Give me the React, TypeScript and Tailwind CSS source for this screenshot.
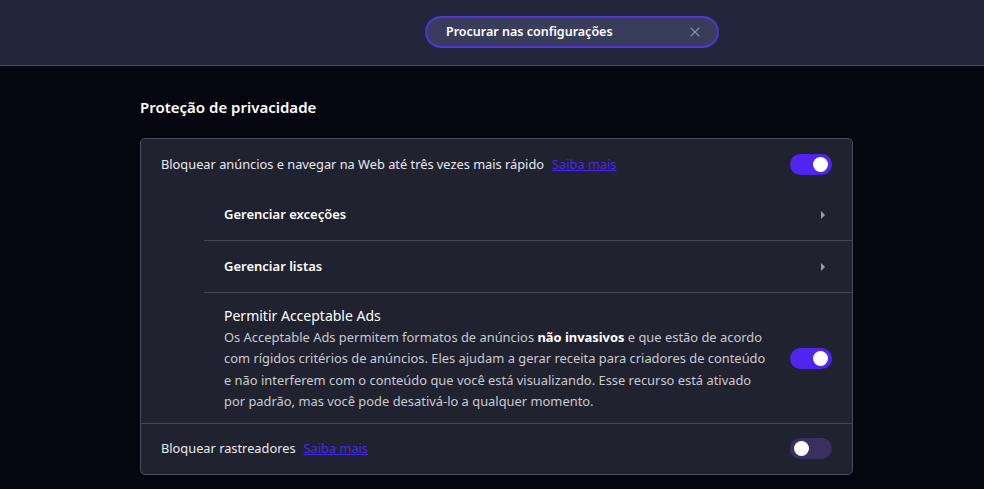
import { X } from 'lucide-react';

function Toggle({ on }: { on: boolean }) {
  return (
    <div
      className={
        on
          ? 'flex h-[21px] w-[42px] shrink-0 items-center justify-end rounded-full bg-[#5025f0] px-[4px]'
          : 'flex h-[21px] w-[42px] shrink-0 items-center justify-start rounded-full bg-[#3a3060] px-[4px]'
      }
    >
      <div className="h-[15px] w-[15px] rounded-full bg-white" />
    </div>
  );
}

function Caret() {
  return (
    <svg width="6" height="10" viewBox="0 0 6 10" className="mr-[26px]">
      <path d="M1 1 L5 5 L1 9 Z" fill="#9a9cab" />
    </svg>
  );
}

export default function App() {
  return (
    <div
      className="min-h-[489px] bg-[#05060f] text-[#e9e9ef]"
      style={{ fontFamily: '"Noto Sans", "Open Sans", sans-serif' }}
    >
      <header className="flex h-[66px] items-start justify-center border-b border-[#4a4c60] bg-[#22243a] pt-[16px]">
        <div className="ml-[160px] flex h-[32px] w-[294px] items-center justify-between rounded-full border-2 border-[#4f35d8] bg-[#3a3c5c] pl-[19px] pr-[14px]">
          <span className="text-[12.5px] font-semibold text-white">Procurar nas configurações</span>
          <X size={16} strokeWidth={1.6} className="text-[#8a8ca8]" />
        </div>
      </header>

      <main className="ml-[140px] w-[713px] pt-[30px]">
        <h2 className="mb-[20px] text-[15px] font-semibold leading-[22px] text-white">Proteção de privacidade</h2>

        <div className="overflow-hidden rounded-[5px] border border-[#4a4c5c] bg-[#20222f]">
          <div className="flex h-[51px] items-center justify-between px-[20px]">
            <div className="text-[12.8px]">
              Bloquear anúncios e navegar na Web até três vezes mais rápido
              <a className="ml-[8px] text-[12.8px] text-[#4a28e8] underline">Saiba mais</a>
            </div>
            <Toggle on />
          </div>

          <div className="ml-[63px]">
            <div className="flex h-[51px] items-center justify-between border-b border-[#454758] pl-[20px]">
              <span className="text-[13px] font-semibold text-white">Gerenciar exceções</span>
              <Caret />
            </div>
            <div className="flex h-[52px] items-center justify-between border-b border-[#454758] pl-[20px]">
              <span className="text-[13px] font-semibold text-white">Gerenciar listas</span>
              <Caret />
            </div>
            <div className="flex items-center justify-between pb-[10px] pl-[20px] pr-[20px] pt-[12px]">
              <div className="leading-[21.5px] whitespace-nowrap">
                <div className="text-[14px] text-white">Permitir Acceptable Ads</div>
                <div className="text-[12.9px] text-[#c9cad3]">
                  Os Acceptable Ads permitem formatos de anúncios <b className="font-bold text-white">não invasivos</b> e que
                  estão de acordo
                  <br />
                  com rígidos critérios de anúncios. Eles ajudam a gerar receita para criadores de conteúdo
                  <br />
                  e não interferem com o conteúdo que você está visualizando. Esse recurso está ativado
                  <br />
                  por padrão, mas você pode desativá-lo a qualquer momento.
                </div>
              </div>
              <Toggle on />
            </div>
          </div>

          <div className="flex h-[51px] items-center justify-between border-t border-[#454758] px-[20px]">
            <div className="text-[12.8px]">
              Bloquear rastreadores
              <a className="ml-[8px] text-[12.8px] text-[#4a28e8] underline">Saiba mais</a>
            </div>
            <Toggle on={false} />
          </div>
        </div>
      </main>
    </div>
  );
}
